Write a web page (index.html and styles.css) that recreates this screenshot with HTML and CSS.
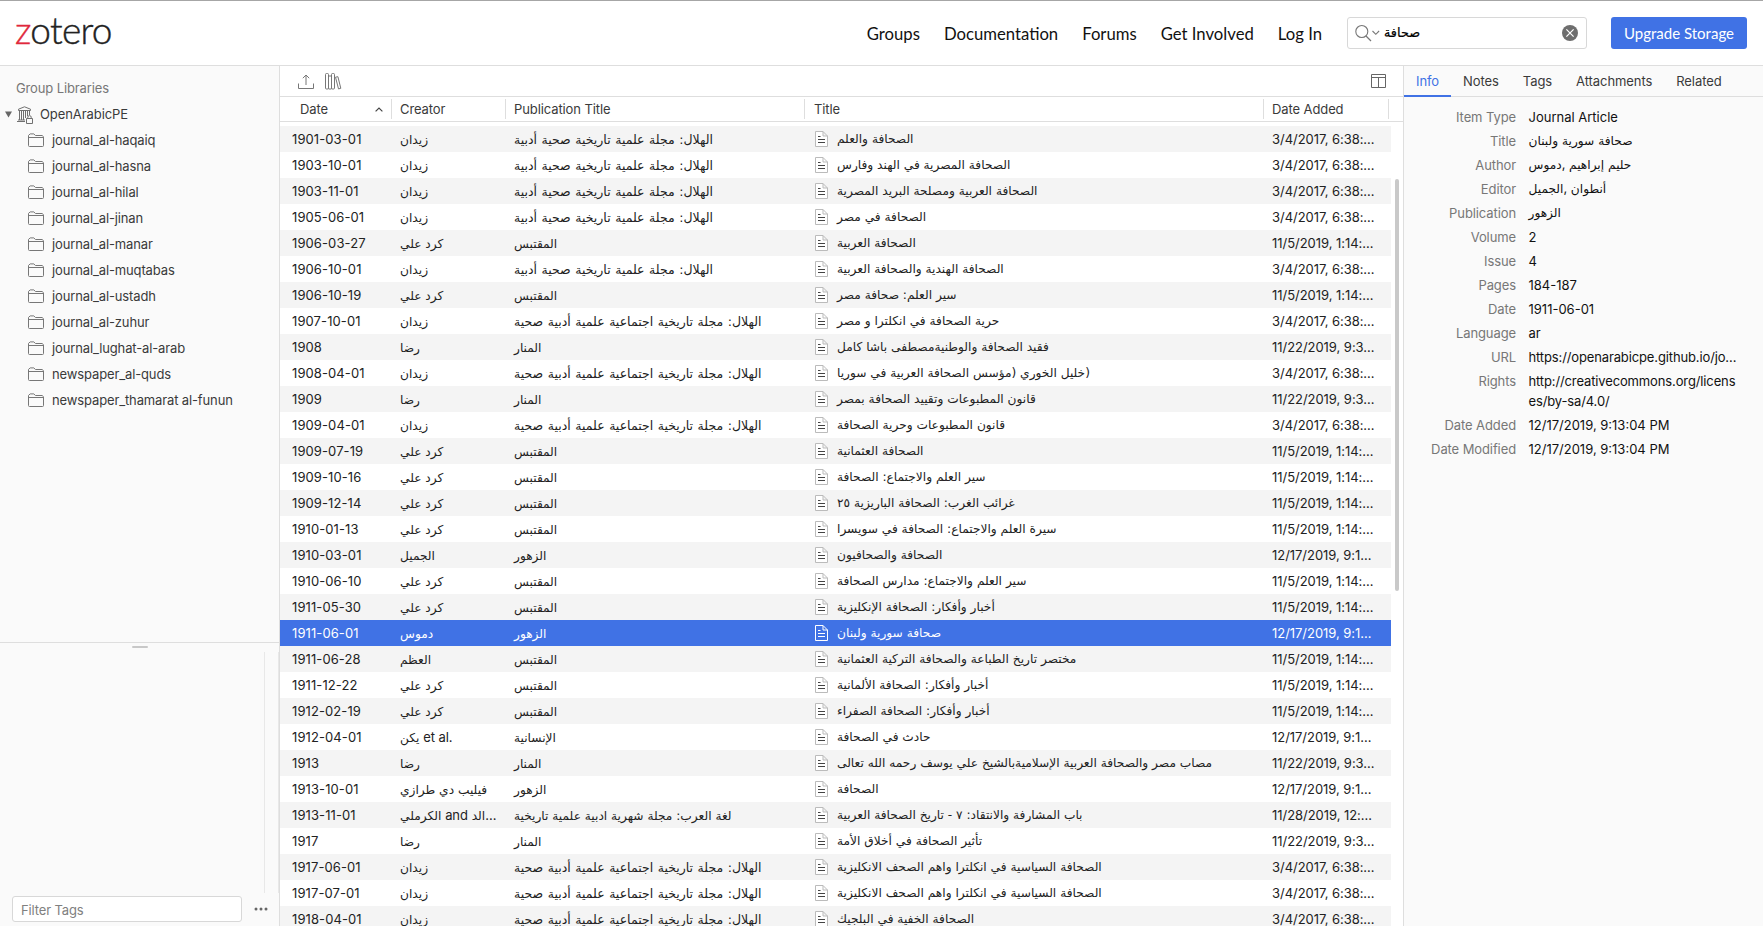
FILE: index.html
```html
<!DOCTYPE html>
<html lang="en">
<head>
<meta charset="utf-8">
<title>Zotero | Groups</title>
<link rel="stylesheet" href="styles.css">
</head>
<body>
<svg class="defs" aria-hidden="true">
  <symbol id="i-folder" viewBox="0 0 16 14"><path d="M.5 12V2.400L2.200.900h3.600l1.700 1.600h6.600l1.400 1.200V12.500q0 1-1 1H1.500q-1 0-1-1zM.5 4.500h15" fill="none" stroke="currentColor"/></symbol>
  <symbol id="i-doc" viewBox="0 0 13 16"><path class="doc-page" d="M.5.500h7.500l4.500 4.500v10.500H.5zM8 .5v4.500h4.500"/><path class="doc-lines" d="M3 5.500h2.500M3 8.500h7M3 11.500h7"/></symbol>
</svg>
<div class="app">
  <header class="topbar">
    <a class="logo"><span class="logo-z">z</span>otero</a>
    <nav class="nav">
      <a>Groups</a><a>Documentation</a><a>Forums</a><a>Get Involved</a><a>Log In</a>
    </nav>
    <div class="search">
      <svg class="search-icon" width="25" height="18" viewBox="0 0 25 18" fill="none" stroke="#777"><circle cx="6.800" cy="7.500" r="6" stroke-width="1.100"/><path d="M11 12l5 5" stroke-width="1.300"/><path d="M17.500 7l3.300 3.300L24.100 7" stroke-width="1.100"/></svg>
      <span class="search-text ar">صحافة</span>
      <svg width="16" height="16" viewBox="0 0 16 16"><circle cx="8" cy="8" r="8" fill="#6e6e6e"/><path d="M4.400 4.400l7.200 7.200M11.600 4.400l-7.200 7.200" stroke="#fff" stroke-width="1.200"/></svg>
    </div>
    <a class="upgrade"><span>Upgrade Storage</span></a>
  </header>
  <div class="main">
    <aside class="sidebar">
      <div class="tree">
        <div class="tree-heading">Group Libraries</div>
        <div class="library">
          <svg class="twisty" width="7" height="7" viewBox="0 0 7 7"><path d="M0 .5h7L3.500 6.500z" fill="#666"/></svg>
          <svg class="library-icon" width="16" height="18" viewBox="0 0 16 18" fill="none" stroke="#707070"><path d="M1.500 4.500v-1.300L7.500.800l6 2.400v1.300zM2.500 5v9M4.500 5v9M6.500 5v9M8.500 5v7M10.500 5v5M12.500 5v4M1 14h7M0 15.500h8"/><path d="M9.500 12.500h6v5h-6zM10.800 12.500v-1.300q0-1.600 1.700-1.600t1.700 1.600v1.300"/></svg>
          OpenArabicPE
        </div>
        <ul class="collections" id="collections"></ul>
      </div>
      <div class="tags">
        <div class="handle"></div>
        <div class="tag-list"><div class="tag-scroll"></div></div>
        <div class="tag-filter">
          <div class="tag-input">Filter Tags</div>
          <svg width="14" height="4" viewBox="0 0 14 4" fill="#666"><circle cx="2" cy="2" r="1.500"/><circle cx="7" cy="2" r="1.500"/><circle cx="12" cy="2" r="1.500"/></svg>
        </div>
      </div>
    </aside>
    <section class="items">
      <div class="toolbar">
        <svg width="16" height="15" viewBox="0 0 16 15" fill="none" stroke="#777"><path d="M.5 9.500v5h15v-5M8 11V1M4.800 4.200L8 1l3.200 3.200"/></svg>
        <svg width="17" height="17" viewBox="0 0 17 17" fill="none" stroke="#777"><rect x=".5" y=".5" width="3" height="15.500" rx="1"/><rect x="3.500" y="3" width="3" height="13" rx=".5"/><rect x="6.500" y=".5" width="3" height="15.500" rx="1"/><path d="M10.500 4.200l2.400-.5 2.900 11.600-2.300.6z"/></svg>
        <svg class="columns-icon" width="15" height="14" viewBox="0 0 15 14" fill="none" stroke="#666"><path d="M.5.500h14v13H.5zM.5 3.500h14M7.500 3.500v10"/></svg>
      </div>
      <div class="row head">
        <div class="c-date">Date<svg width="8" height="5" viewBox="0 0 8 5" fill="none" stroke="#444" stroke-width="1.200"><path d="M.6 4.400L4 1l3.400 3.400"/></svg></div>
        <div class="c-creator">Creator</div>
        <div class="c-pub">Publication Title</div>
        <div class="c-title">Title</div>
        <div class="c-added">Date Added</div>
      </div>
      <div class="body">
        <div class="rows" id="rows"></div>
        <div class="gutter"><div class="thumb"></div></div>
      </div>
    </section>
    <aside class="details">
      <div class="tabs"><a class="active">Info</a><a>Notes</a><a>Tags</a><a>Attachments</a><a>Related</a></div>
      <dl class="meta">
        <dt>Item Type</dt><dd>Journal Article</dd>
        <dt>Title</dt><dd class="ar">صحافة سورية ولبنان</dd>
        <dt>Author</dt><dd class="ar"><bdi>دموس</bdi><i>, </i><bdi>حليم إبراهيم</bdi></dd>
        <dt>Editor</dt><dd class="ar"><bdi>الجميل</bdi><i>, </i><bdi>أنطوان</bdi></dd>
        <dt>Publication</dt><dd class="ar">الزهور</dd>
        <dt>Volume</dt><dd>2</dd>
        <dt>Issue</dt><dd>4</dd>
        <dt>Pages</dt><dd>184-187</dd>
        <dt>Date</dt><dd>1911-06-01</dd>
        <dt>Language</dt><dd>ar</dd>
        <dt>URL</dt><dd class="link">https://openarabicpe.github.io/jo…</dd>
        <dt>Rights</dt><dd class="link">http://creativecommons.org/licens<br>es/by-sa/4.0/</dd>
        <dt>Date Added</dt><dd>12/17/2019, 9:13:04 PM</dd>
        <dt>Date Modified</dt><dd>12/17/2019, 9:13:04 PM</dd>
      </dl>
    </aside>
  </div>
</div>
<script src="app.js"></script>
</body>
</html>
```

FILE: styles.css
```css
* { box-sizing: border-box; }
body {
  margin: 0;
  font: 13px/20px Inter, "DejaVu Sans", sans-serif;
  color: #222;
  background: #fff;
}
.defs { display: none; }
svg { flex: none; display: block; }
.ar { font-family: "DejaVu Sans", sans-serif; font-size: 12.2px; }
.ar i { font: 13px Inter, sans-serif; letter-spacing: -.1px; }
.app { height: 926px; display: flex; flex-direction: column; overflow: hidden; border-top: 1px solid #a6a6a6; }

.topbar { height: 65px; flex: none; display: flex; align-items: center; padding: 0 16px; border-bottom: 1px solid #dedede; }
.logo { font: 300 37px/40px Lato, sans-serif; letter-spacing: -.7px; color: #222; padding-bottom: 7px; margin-left: -1px; -webkit-text-stroke: .4px; }
.logo-z { color: #e0283c; }
.nav { margin-left: auto; display: flex; font: 16.700px/20px Lato, sans-serif; color: #111; gap: 24px; margin-right: 25px; padding-top: 1px; }
.search { width: 240px; height: 32px; border: 1px solid #d8d8d8; border-radius: 3px; display: flex; align-items: center; padding: 0 8px 0 7px; }
.search-text { flex: 1; padding-left: 4px; color: #000; font-size: 12.800px; -webkit-text-stroke: .2px; }
.upgrade { margin-left: 24px; width: 136px; height: 32px; border-radius: 3px; background: #4072e5; color: #fff; font: 15px/32px Lato, sans-serif; text-align: center; }

.main { flex: 1; min-height: 0; display: flex; }
.sidebar { width: 280px; flex: none; background: #fafafa; border-right: 1px solid #dedede; display: flex; flex-direction: column; color: #3a3a3a; letter-spacing: -.13px; }
.tree { flex: 1; padding-top: 11px; }
.tree-heading { padding-left: 16px; height: 24px; line-height: 22px; color: #777; }
.library { height: 26px; display: flex; align-items: center; padding-left: 5px; letter-spacing: -.08px; line-height: 18px; }
.library-icon { margin: 2px 7px 0 5px; }
.collections { list-style: none; margin: 0; padding: 0; }
.collections li { height: 26px; display: flex; align-items: center; gap: 8px; padding-left: 28px; }
.collections span { line-height: 18px; padding-bottom: 1px; }
.collections svg { width: 16px; height: 14px; color: #777; }
.tags { height: 284px; flex: none; border-top: 1px solid #dedede; display: flex; flex-direction: column; }
.handle { width: 16px; height: 2px; border-radius: 1px; background: #c8c8c8; margin: 3px auto 4px 132px; }
.tag-list { height: 241px; display: flex; justify-content: flex-end; }
.tag-scroll { width: 15px; border: solid #e8e8e8; border-width: 0 1px; }
.tag-filter { display: flex; align-items: center; padding: 3px 0 0 12px; gap: 12px; }
.tag-input { width: 230px; height: 26px; border: 1px solid #d8d8d8; border-radius: 3px; background: #fff; color: #808080; padding: 3px 8px; }

.items { width: 1124px; flex: none; display: flex; flex-direction: column; min-height: 0; }
.toolbar { height: 31px; flex: none; border-bottom: 1px solid #dedede; display: flex; align-items: center; padding: 0 18px; gap: 11px; }
.columns-icon { margin-left: auto; }
.row { display: flex; height: 26px; line-height: 27px; white-space: nowrap; }
.row > div { overflow: hidden; }
.c-date { width: 112px; padding-left: 12px; flex: none; letter-spacing: .1px; }
.c-creator { width: 114px; padding-left: 8px; flex: none; }
.c-pub { width: 299px; padding-left: 8px; flex: none; }
.c-title { width: 459px; padding-left: 10px; flex: none; display: flex; align-items: center; }
.c-added { width: 125px; padding-left: 8px; flex: none; letter-spacing: -.04px; }
.c-pub .wide { font-size: 12.500px; word-spacing: .6px; }
.head { height: 25px; flex: none; border-bottom: 1px solid #dedede; color: #3a3a3a; padding-top: 2px; }
.head > div { height: 20px; line-height: 21px; border-right: 1px solid #dedede; letter-spacing: -.1px; }
.head .c-date { padding-left: 20px; padding-right: 8px; display: flex; align-items: center; justify-content: space-between; }
.head .c-title { padding-left: 9px; }
.body { flex: 1; min-height: 0; overflow: hidden; padding-top: 4px; display: flex; }
.rows { width: 1111px; flex: none; --doc-fill: #fff; --doc-edge: #bbb; --doc-ink: #444; }
.rows .row:nth-child(odd) { background: #f4f4f4; }
.rows .row.selected { background: #4072e5; color: #fff; --doc-fill: none; --doc-edge: #fff; --doc-ink: #fff; }
.rows svg { width: 13px; height: 16px; margin-right: 9px; }
.doc-page { fill: var(--doc-fill); stroke: var(--doc-edge); }
.doc-lines { fill: none; stroke: var(--doc-ink); }
.gutter { padding: 53px 0 0 4px; }
.thumb { width: 4px; height: 412px; border-radius: 2px; background: #c9c9c9; }

.details { flex: 1; background: #fafafa; border-left: 1px solid #dedede; margin-left: -1px; }
.tabs { height: 31px; display: flex; border-bottom: 1px solid #dedede; color: #3a3a3a; letter-spacing: -.08px; }
.tabs a { padding: 0 12px; height: 31px; line-height: 31px; }
.tabs .active { color: #4072e5; border-bottom: 2px solid #4072e5; }
.meta { margin: 10px 0 0; display: grid; grid-template-columns: 112px 1fr; column-gap: 12.500px; row-gap: 4px; }
.meta dt { text-align: right; color: #777; letter-spacing: -.1px; }
.meta dd { margin: 0; white-space: nowrap; color: #111; }
.meta .link { letter-spacing: -.13px; }
```

FILE: app.js
```js
const folders = ['journal_al-haqaiq', 'journal_al-hasna', 'journal_al-hilal', 'journal_al-jinan', 'journal_al-manar',
  'journal_al-muqtabas', 'journal_al-ustadh', 'journal_al-zuhur', 'journal_lughat-al-arab', 'newspaper_al-quds',
  'newspaper_thamarat al-funun'];

const pubs = {
  h: 'الهلال: مجلة علمية تاريخية صحية أدبية',
  s: 'الهلال: مجلة تاريخية اجتماعية علمية أدبية صحية',
  m: 'المقتبس', n: 'المنار', z: 'الزهور', i: 'الإنسانية',
  l: 'لغة العرب: مجلة شهرية ادبية علمية تاريخية'
};
const creators = { Z: 'زيدان', K: 'كرد علي', R: 'رضا', J: 'الجميل', D: 'دموس', A: 'العظم' };
const added = { a: '3/4/2017, 6:38:…', b: '11/5/2019, 1:14:…', c: '11/22/2019, 9:3…', d: '12/17/2019, 9:1…', e: '11/28/2019, 12:…' };

const items = [
  ['1901-03-01', 'Z', 'h', 'الصحافة والعلم', 'a'],
  ['1903-10-01', 'Z', 'h', 'الصحافة المصرية في الهند وفارس', 'a'],
  ['1903-11-01', 'Z', 'h', 'الصحافة العربية ومصلحة البريد المصرية', 'a'],
  ['1905-06-01', 'Z', 'h', 'الصحافة في مصر', 'a'],
  ['1906-03-27', 'K', 'm', 'الصحافة العربية', 'b'],
  ['1906-10-01', 'Z', 'h', 'الصحافة الهندية والصحافة العربية', 'a'],
  ['1906-10-19', 'K', 'm', 'سير العلم: صحافة مصر', 'b'],
  ['1907-10-01', 'Z', 's', 'حرية الصحافة في انكلترا و مصر', 'a'],
  ['1908', 'R', 'n', 'فقيد الصحافة والوطنيةمصطفى باشا كامل', 'c'],
  ['1908-04-01', 'Z', 's', 'خليل الخوري (مؤسس الصحافة العربية في سوريا<bdi dir="ltr">)</bdi>', 'a'],
  ['1909', 'R', 'n', 'قانون المطبوعات وتقييد الصحافة بمصر', 'c'],
  ['1909-04-01', 'Z', 's', 'قانون المطبوعات وحرية الصحافة', 'a'],
  ['1909-07-19', 'K', 'm', 'الصحافة العثمانية', 'b'],
  ['1909-10-16', 'K', 'm', 'سير العلم والاجتماع: الصحافة', 'b'],
  ['1909-12-14', 'K', 'm', 'غرائب الغرب: الصحافة الباريزية ٢٥', 'b'],
  ['1910-01-13', 'K', 'm', 'سيرة العلم والاجتماع: الصحافة في سويسرا', 'b'],
  ['1910-03-01', 'J', 'z', 'الصحافة والصحافيون', 'd'],
  ['1910-06-10', 'K', 'm', 'سير العلم والاجتماع: مدارس الصحافة', 'b'],
  ['1911-05-30', 'K', 'm', 'أخبار وأفكار: الصحافة الإنكليزية', 'b'],
  ['1911-06-01', 'D', 'z', 'صحافة سورية ولبنان', 'd', true],
  ['1911-06-28', 'A', 'm', 'مختصر تاريخ الطباعة والصحافة التركية العثمانية', 'b'],
  ['1911-12-22', 'K', 'm', 'أخبار وأفكار: الصحافة الألمانية', 'b'],
  ['1912-02-19', 'K', 'm', 'أخبار وأفكار: الصحافة الصفراء', 'b'],
  ['1912-04-01', 'يكن <i>et al.</i>', 'i', 'حادث في الصحافة', 'd'],
  ['1913', 'R', 'n', 'مصاب مصر والصحافة العربية الإسلاميةبالشيخ علي يوسف رحمه الله تعالى', 'c'],
  ['1913-10-01', 'فيليب دي طرازي', 'z', 'الصحافة', 'd'],
  ['1913-11-01', 'الكرملي <i>and</i> الد<i>…</i>', 'l', 'باب المشارفة والانتقاد: ٧ - تاريخ الصحافة العربية', 'e'],
  ['1917', 'R', 'n', 'تأثير الصحافة في أخلاق الأمة', 'c'],
  ['1917-06-01', 'Z', 's', 'الصحافة السياسية في انكلترا واهم الصحف الانكليزية', 'a'],
  ['1917-07-01', 'Z', 's', 'الصحافة السياسية في انكلترا واهم الصحف الانكليزية', 'a'],
  ['1918-04-01', 'Z', 's', 'الصحافة الخفية في البلجيك', 'a']
];

document.getElementById('collections').innerHTML = folders.map(f =>
  `<li><svg><use href="#i-folder"/></svg><span>${f}</span></li>`).join('');

document.getElementById('rows').innerHTML = items.map(([date, creator, pub, title, add, selected]) =>
  `<div class="row${selected ? ' selected' : ''}">
    <div class="c-date">${date}</div>
    <div class="c-creator"><span class="ar">${creators[creator] || creator}</span></div>
    <div class="c-pub"><span class="ar${pub === 'h' || pub === 's' ? ' wide' : ''}">${pubs[pub]}</span></div>
    <div class="c-title"><svg><use href="#i-doc"/></svg><span class="ar">${title}</span></div>
    <div class="c-added">${added[add]}</div>
  </div>`).join('');
```
